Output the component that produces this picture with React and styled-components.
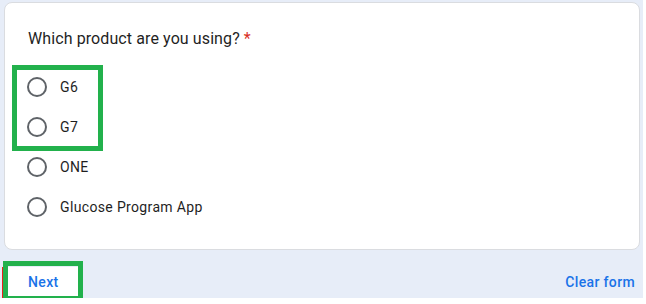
import React from "react";
import styled, { createGlobalStyle } from "styled-components";

const GlobalStyle = createGlobalStyle`
  html, body {
    margin: 0;
    padding: 0;
    background: #ffffff;
  }
  body {
    font-family: Roboto, "Noto Sans", Arial, sans-serif;
  }
`;

const Page = styled.div`
  position: relative;
  width: 643px;
  height: 298px;
  background: #e7edf8;
  padding: 2px 3px 0 4px;
  box-sizing: border-box;
  display: flex;
  flex-direction: column;
`;

const Card = styled.section`
  background: #ffffff;
  border: 1px solid #dadce0;
  border-radius: 8px;
  height: 248px;
  box-sizing: border-box;
  padding: 24px 22px 22px 22px;
  display: flex;
  flex-direction: column;
  gap: 16px;
`;

const Question = styled.div`
  margin-left: 1px;
  font-size: 16px;
  line-height: 24px;
  color: #1f1f1f;
  letter-spacing: 0.1px;
`;

const Required = styled.span`
  color: #d93025;
  margin-left: 4px;
`;

const Options = styled.div`
  display: flex;
  flex-direction: column;
`;

const Option = styled.label`
  display: flex;
  align-items: center;
  height: 40px;
  gap: 13px;
  font-size: 14px;
  color: #1f1f1f;
  letter-spacing: 0.35px;
  cursor: pointer;
`;

const Radio = styled.span`
  width: 20px;
  height: 20px;
  box-sizing: border-box;
  border: 2px solid #5f6368;
  border-radius: 50%;
  flex-shrink: 0;
`;

const Footer = styled.footer`
  flex: 1;
  display: flex;
  justify-content: space-between;
  align-items: flex-start;
  padding: 17px 0 0 4px;
`;

const FooterButton = styled.button`
  background: ${(p) => (p.$filled ? "#ffffff" : "transparent")};
  border: none;
  height: 30px;
  font-family: inherit;
  font-size: 14px;
  font-weight: 500;
  color: #1a73e8;
  letter-spacing: 0.35px;
  text-align: left;
  cursor: pointer;
`;

const NextButton = styled(FooterButton)`
  width: 70px;
  padding: 0 0 0 20px;
`;

const ClearButton = styled(FooterButton)`
  padding: 0 5px 0 0;
`;

const Highlight = styled.div`
  position: absolute;
  left: ${(p) => p.$x}px;
  top: ${(p) => p.$y}px;
  width: ${(p) => p.$w}px;
  height: ${(p) => p.$h}px;
  border: 5px solid #22b14c;
  box-sizing: border-box;
  pointer-events: none;
`;

const RedMark = styled.div`
  position: absolute;
  left: 2px;
  top: 267px;
  width: 2px;
  height: 31px;
  background: #e8201c;
`;

const options = ["G6", "G7", "ONE", "Glucose Program App"];

export default function App() {
  return (
    <>
      <GlobalStyle />
      <Page>
        <Card>
          <Question>
            Which product are you using?<Required>*</Required>
          </Question>
          <Options>
            {options.map((o) => (
              <Option key={o}>
                <Radio />
                {o}
              </Option>
            ))}
          </Options>
        </Card>
        <Footer>
          <NextButton $filled>Next</NextButton>
          <ClearButton>Clear form</ClearButton>
        </Footer>
        <Highlight $x={12} $y={65} $w={91} $h={86} />
        <RedMark />
        <Highlight $x={3} $y={261} $w={80} $h={40} />
      </Page>
    </>
  );
}
